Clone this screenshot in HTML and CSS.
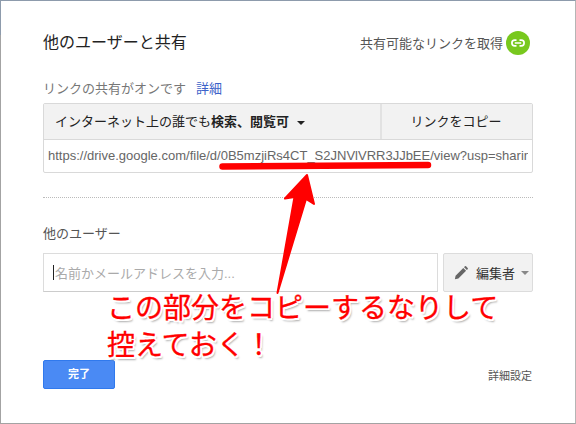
FILE: index.html
```html
<!DOCTYPE html>
<html lang="ja">
<head>
<meta charset="utf-8">
<title>他のユーザーと共有</title>
<link rel="stylesheet" href="styles.css">
</head>
<body>
<div class="dialog">
  <header class="head">
    <h1 class="title">他のユーザーと共有</h1>
    <div class="getlink">
      <span>共有可能なリンクを取得</span>
      <span class="linkicon">
        <svg width="24" height="24" viewBox="0 0 24 24"><circle cx="12" cy="12" r="12" fill="#78c81e"/><path d="M10.5 9.200H8.700a2.800 2.800 0 0 0 0 5.600h1.800M13.500 9.200h1.800a2.800 2.800 0 0 1 0 5.600h-1.800M8.800 12h6.400" fill="none" stroke="#fff" stroke-width="1.700"/></svg>
      </span>
    </div>
  </header>
  <p class="status">リンクの共有がオンです<a class="detail">詳細</a></p>
  <div class="linkbox">
    <div class="linkbar">
      <div class="access">インターネット上の誰でも<b>検索、閲覧可</b><i class="caret dark"></i></div>
      <div class="copy">リンクをコピー</div>
    </div>
    <div class="url">https://drive.google.com/file/d/0B5mzjiRs4CT_S2JNVlVRR3JJbEE/view?usp=sharing</div>
  </div>
  <hr class="sep">
  <p class="others">他のユーザー</p>
  <div class="invite">
    <div class="field"><span class="cursor"></span>名前かメールアドレスを入力...</div>
    <div class="role">
      <svg width="14" height="14" viewBox="0 0 16 16"><path d="M1 15l.8-4L10.600 2.200l3.200 3.200L5 14.200z M11.500 1.300l.9-.9a1 1 0 0 1 1.400 0l1.800 1.800a1 1 0 0 1 0 1.400l-.9.9z" fill="#666"/></svg>
      <span>編集者</span><i class="caret"></i>
    </div>
  </div>
  <footer class="foot">
    <div class="done">完了</div>
    <div class="advanced">詳細設定</div>
  </footer>
  <svg class="arrow" width="576" height="424" viewBox="0 0 576 424">
    <path d="M222.500 166.500L428 165" stroke="#f00" stroke-width="6.500" stroke-linecap="round" fill="none"/>
    <path d="M277.500 293L294.500 197L285 198.500L307 175L314 204L306 199Z" fill="#f00" stroke="#f00" stroke-width="2" stroke-linejoin="round"/>
  </svg>
  <div class="note">この部分をコピーするなりして<br>控えておく！</div>
</div>
</body>
</html>
```
FILE: styles.css
```css
* { box-sizing: border-box; }
html, body { margin: 0; padding: 0; }
body { width: 576px; height: 424px; overflow: hidden; background: #fff; font-family: Arial, "Liberation Sans", "Noto Sans CJK JP", sans-serif; }
.dialog { position: relative; width: 576px; height: 424px; padding: 27px 42px 0; background: #fff; border: 1px solid #a3a3a3; border-top-color: #8d9bac; border-right-color: #b5b5b5; }
.dialog::before { content: ""; position: absolute; left: -1px; top: -1px; width: 1px; height: 35px; background: #8d9bac; }
.head { display: flex; justify-content: space-between; align-items: center; height: 29px; }
.title { margin: 0 0 4px; font-size: 16px; font-weight: 400; color: #222; }
.getlink { display: flex; align-items: center; gap: 3px; font-size: 13px; color: #555; margin-right: 3px; }
.linkicon { display: block; height: 24px; }
.status { margin: 23px 0 0; height: 18px; font-size: 13px; line-height: 18px; color: #777; }
.detail { margin-left: 10px; color: #3b62c9; }
.linkbox { margin-top: 5px; border: 1px solid #d9d9d9; border-radius: 2px; }
.linkbar { display: flex; height: 36px; background: #f2f2f2; border-bottom: 1px solid #d9d9d9; font-size: 13px; color: #222; }
.access { width: 336px; padding-left: 11px; line-height: 35px; white-space: nowrap; }
.access b { font-weight: 700; }
.copy { flex: 1; padding-right: 2px; line-height: 35px; text-align: center; border-left: 2px solid #e2e2e2; }
.caret { display: inline-block; width: 0; height: 0; border: 4px solid transparent; border-top: 4px solid #888; border-bottom: 0; vertical-align: middle; }
.caret.dark { border-top-color: #222; margin-left: 8px; }
.url { height: 32px; margin-right: 4px; padding-left: 4px; font-size: 13px; line-height: 31px; color: #666; overflow: hidden; white-space: nowrap; }
.sep { margin: 24px 0 0; border: 0; border-top: 1px dotted #bbb; }
.others { margin: 27px 0 0; font-size: 13px; line-height: 18px; color: #555; }
.invite { display: flex; gap: 5px; margin-top: 10px; height: 39px; }
.field { display: flex; align-items: center; flex: 1; border: 1px solid #dcdcdc; border-bottom-color: #ccc; padding-left: 9px; font-size: 13px; color: #aaa; white-space: nowrap; }
.cursor { width: 1px; height: 15px; background: #222; margin-right: 1px; }
.role { display: flex; align-items: center; width: 90px; padding-left: 10px; background: #f2f2f2; border: 1px solid #dcdcdc; border-radius: 2px; font-size: 13px; color: #333; }
.role span { margin-left: 8px; }
.role .caret { margin-left: 6px; }
.foot { display: flex; justify-content: space-between; align-items: center; margin-top: 68px; height: 29px; }
.done { width: 72px; height: 29px; background: #4a8af4; border: 1px solid #3079ed; border-radius: 2px; color: #fff; font-size: 11px; font-weight: 700; line-height: 27px; text-align: center; }
.advanced { margin-right: 1px; font-size: 11px; color: #555; }
.arrow { position: absolute; left: -1px; top: -1px; pointer-events: none; }
.note { position: absolute; left: 106px; top: 289px; font-size: 28px; line-height: 37px; color: #f00; white-space: nowrap; -webkit-text-stroke: 0.3px #f00; text-shadow: 2px 0 0 #fff, -2px 0 0 #fff, 0 2px 0 #fff, 0 -2px 0 #fff, 1.500px 1.500px 0 #fff, -1.500px -1.500px 0 #fff, 1.500px -1.500px 0 #fff, -1.500px 1.500px 0 #fff, 2px 3px 2px #aaa; }
```
